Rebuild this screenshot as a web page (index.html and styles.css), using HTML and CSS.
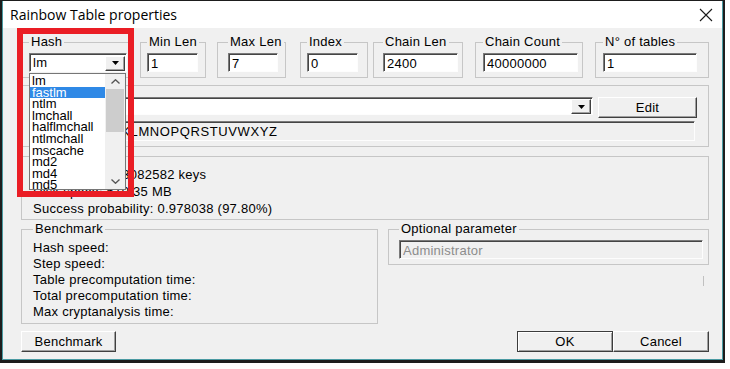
FILE: index.html
```html
<!DOCTYPE html>
<html lang="en">
<head>
    <meta charset="UTF-8">
    <title>Rainbow Table properties</title>
    <link rel="stylesheet" href="styles.css">
</head>
<body>
    <div class="window">
        <div class="titlebar">
            <span class="title">Rainbow Table properties</span>
            <svg class="close" width="14" height="14" viewBox="0 0 14 14">
                <path d="M1 1 L13 13 M13 1 L1 13" stroke="#1a1a1a" stroke-width="1.1" fill="none"/>
            </svg>
        </div>

        <div class="client">
            <!-- fila de parametros -->
            <div class="row params">
                <fieldset class="group g-hash">
                    <legend>Hash</legend>
                    <div class="combo">
                        <span class="combo-text">lm</span>
                        <span class="drop"><svg width="7" height="4" viewBox="0 0 7 4"><path d="M0 0 H7 L3.5 4 Z" fill="#000"/></svg></span>
                    </div>
                </fieldset>
                <fieldset class="group g-min">
                    <legend>Min Len</legend>
                    <input class="edit" type="text" value="1">
                </fieldset>
                <fieldset class="group g-max">
                    <legend>Max Len</legend>
                    <input class="edit" type="text" value="7">
                </fieldset>
                <fieldset class="group g-index">
                    <legend>Index</legend>
                    <input class="edit" type="text" value="0">
                </fieldset>
                <fieldset class="group g-chainlen">
                    <legend>Chain Len</legend>
                    <input class="edit" type="text" value="2400">
                </fieldset>
                <fieldset class="group g-count">
                    <legend>Chain Count</legend>
                    <input class="edit" type="text" value="40000000">
                </fieldset>
                <fieldset class="group g-tables">
                    <legend>N° of tables</legend>
                    <input class="edit" type="text" value="1">
                </fieldset>
            </div>

            <fieldset class="group g-charset">
                <legend>Charset</legend>
                <div class="charset-line">
                    <div class="combo combo-wide">
                        <span class="combo-text"></span>
                        <span class="drop"><svg width="7" height="4" viewBox="0 0 7 4"><path d="M0 0 H7 L3.5 4 Z" fill="#000"/></svg></span>
                    </div>
                    <button class="btn btn-edit">Edit</button>
                </div>
                <div class="field">ABCDEFGHIJKLMNOPQRSTUVWXYZ</div>
            </fieldset>

            <fieldset class="group g-stats">
                <legend>Table</legend>
                <div class="line">Keyspace: 8353082582 keys</div>
                <div class="line">Disk space: 610.35 MB</div>
                <div class="line">Success probability: 0.978038 (97.80%)</div>
            </fieldset>

            <div class="row bottom">
                <fieldset class="group g-bench">
                    <legend>Benchmark</legend>
                    <div class="line">Hash speed:</div>
                    <div class="line">Step speed:</div>
                    <div class="line">Table precomputation time:</div>
                    <div class="line">Total precomputation time:</div>
                    <div class="line">Max cryptanalysis time:</div>
                </fieldset>
                <div class="side">
                    <fieldset class="group g-opt">
                        <legend>Optional parameter</legend>
                        <input class="edit disabled" type="text" value="Administrator" disabled>
                    </fieldset>
                    <div class="tick"></div>
                </div>
            </div>

            <div class="row buttons">
                <button class="btn btn-bench">Benchmark</button>
                <div class="spacer"></div>
                <button class="btn btn-ok">OK</button>
                <button class="btn btn-cancel">Cancel</button>
            </div>

            <!-- lista desplegable abierta del combo Hash -->
            <div class="dropdown">
                <ul class="options">
                    <li>lm</li>
                    <li class="selected">fastlm</li>
                    <li>ntlm</li>
                    <li>lmchall</li>
                    <li>halflmchall</li>
                    <li>ntlmchall</li>
                    <li>mscache</li>
                    <li>md2</li>
                    <li>md4</li>
                    <li>md5</li>
                </ul>
                <div class="scroll">
                    <span class="arrow"><svg width="9" height="5" viewBox="0 0 9 5"><polyline points="0.5,4.5 4.5,0.7 8.5,4.5" fill="none" stroke="#555" stroke-width="1.3"/></svg></span>
                    <span class="thumb"></span>
                    <span class="arrow arrow-down"><svg width="9" height="5" viewBox="0 0 9 5"><polyline points="0.5,0.5 4.5,4.3 8.5,0.5" fill="none" stroke="#555" stroke-width="1.3"/></svg></span>
                </div>
            </div>

            <!-- recuadro rojo de resaltado -->
            <div class="marker"></div>
        </div>
    </div>
</body>
</html>
```

FILE: styles.css
```css
* {
    box-sizing: border-box;
}

body {
    margin: 0;
    background-color: #fff;
    font-family: "Liberation Sans", Arial, sans-serif;
    font-size: 13px;
    letter-spacing: 0.25px;
    color: #000;
}

.window {
    width: 725px;
    height: 363px;
    border-style: solid;
    border-color: #1d1d1d;
    border-width: 1px 2px 3px 2px;
    padding: 0 1px 1px 1px;
    background-color: #4a9aa2;
    display: flex;
    flex-direction: column;
}

.titlebar {
    height: 27px;
    background-color: #fff;
    display: flex;
    align-items: center;
    justify-content: space-between;
    padding: 0 9px 0 7px;
}

.title {
    font-family: "Open Sans", sans-serif;
    font-size: 14px;
    letter-spacing: 0;
}

.client {
    position: relative;
    flex: 1;
    background-color: #f0f0f0;
    padding: 7px 13px 0 18px;
}

.row {
    display: flex;
}

/* Cuadros de grupo */
.group {
    margin: 0;
    min-width: 0;
    border: 1px solid #c6c6c6;
}

.group legend {
    padding: 0 2px;
    height: 14px;
    line-height: 14px;
    white-space: nowrap;
}

.params .group {
    padding-top: 4px;
    padding-bottom: 5px;
}

.g-hash { width: 110px; padding-left: 7px; padding-right: 3px; }
.g-min { width: 66px; margin-left: 9px; padding-left: 6px; padding-right: 7px; }
.g-max { width: 69px; margin-left: 11px; padding-left: 10px; padding-right: 7px; }
.g-index { width: 68px; margin-left: 14px; padding-left: 6px; padding-right: 9px; }
.g-chainlen { width: 90px; margin-left: 5px; padding-left: 9px; padding-right: 4px; }
.g-count { width: 108px; margin-left: 12px; padding-left: 7px; padding-right: 4px; }
.g-tables { width: 114px; margin-left: 12px; padding-left: 7px; padding-right: 11px; }

/* Campos hundidos */
.edit,
.combo,
.field {
    display: block;
    width: 100%;
    height: 19px;
    margin: 0;
    background-color: #fff;
    border: 1px solid;
    border-color: #7a7a7a #fdfdfd #fdfdfd #7a7a7a;
    box-shadow: inset 1px 1px 0 #454545;
    padding: 1px 2px 0 3px;
    font-family: inherit;
    font-size: 13px;
    letter-spacing: inherit;
    color: #000;
    outline: none;
}

.edit.disabled {
    background-color: #f0f0f0;
    color: #8c8c8c;
    -webkit-text-fill-color: #8c8c8c;
    opacity: 1;
}

.combo {
    display: flex;
    align-items: center;
    padding: 0 1px 0 3px;
}

.combo-text {
    flex: 1;
}

.drop {
    width: 20px;
    height: 15px;
    margin-top: 1px;
    display: flex;
    align-items: center;
    justify-content: center;
    background-color: #f0f0f0;
    border: 1px solid;
    border-color: #fff #404040 #404040 #fff;
    box-shadow: inset -1px -1px 0 #a0a0a0;
}

/* Grupo del juego de caracteres */
.g-charset {
    padding: 5px 11px 5px 7px;
}

.charset-line {
    display: flex;
    height: 18px;
}

.combo-wide {
    flex: 1;
    height: 18px;
}

.btn-edit {
    width: 99px;
    height: 18px;
    margin-left: 5px;
}

.field {
    height: 20px;
    margin-top: 6px;
    width: auto;
    margin-right: 2px;
    background-color: #f0f0f0;
    line-height: 17px;
    letter-spacing: 0.6px;
}

/* Estadisticas */
.g-stats {
    margin-top: 2px;
    padding: 3px 11px 2px 11px;
}

.g-stats .line {
    height: 17px;
    line-height: 17px;
    white-space: nowrap;
}

.bottom {
    margin-top: 2px;
    align-items: flex-start;
}

.g-bench {
    width: 357px;
    padding: 4px 11px 3px 11px;
}

.g-bench .line {
    height: 16px;
    line-height: 16px;
}

.side {
    flex: 1;
    margin-left: 10px;
    display: flex;
    flex-direction: column;
}

.g-opt {
    padding: 4px 5px 5px 10px;
}

.tick {
    align-self: flex-end;
    width: 1px;
    height: 10px;
    margin: 11px 5px 0 0;
    background-color: #c0c0c0;
}

/* Botones */
.buttons {
    margin-top: 7px;
}

.btn {
    height: 21px;
    padding: 0;
    font-family: inherit;
    font-size: 13px;
    letter-spacing: inherit;
    color: #000;
    background-color: #f0f0f0;
    border: 1px solid;
    border-color: #fff #404040 #404040 #fff;
    box-shadow: inset -1px -1px 0 #a0a0a0;
}

.btn-bench {
    width: 95px;
}

.spacer {
    flex: 1;
}

.btn-ok {
    width: 96px;
    border-color: #3c3c3c;
    box-shadow: inset 1px 1px 0 #fff, inset -1px -1px 0 #a0a0a0;
}

.btn-cancel {
    width: 96px;
}

/* Lista desplegable */
.dropdown {
    position: absolute;
    left: 26px;
    top: 45px;
    width: 97px;
    height: 117px;
    display: flex;
    background-color: #fff;
    border: 1px solid #767676;
}

.options {
    list-style: none;
    margin: 0;
    padding: 1px 0 0 0;
    flex: 1;
    font-size: 13px;
    letter-spacing: 0;
}

.options li {
    height: 11.6px;
    line-height: 11.6px;
    padding-left: 2px;
    white-space: nowrap;
}

.options li.selected {
    background-color: #2f89e6;
    color: #fff;
}

.scroll {
    width: 20px;
    display: flex;
    flex-direction: column;
    align-items: center;
    background-color: #f0f0f0;
}

.arrow {
    height: 15px;
    display: flex;
    align-items: center;
}

.arrow-down {
    margin-top: auto;
}

.thumb {
    width: 18px;
    height: 43px;
    background-color: #cdcdcd;
}

.marker {
    position: absolute;
    left: 14px;
    top: 0;
    width: 117px;
    height: 169px;
    border: 6px solid #ea1d25;
}
```
